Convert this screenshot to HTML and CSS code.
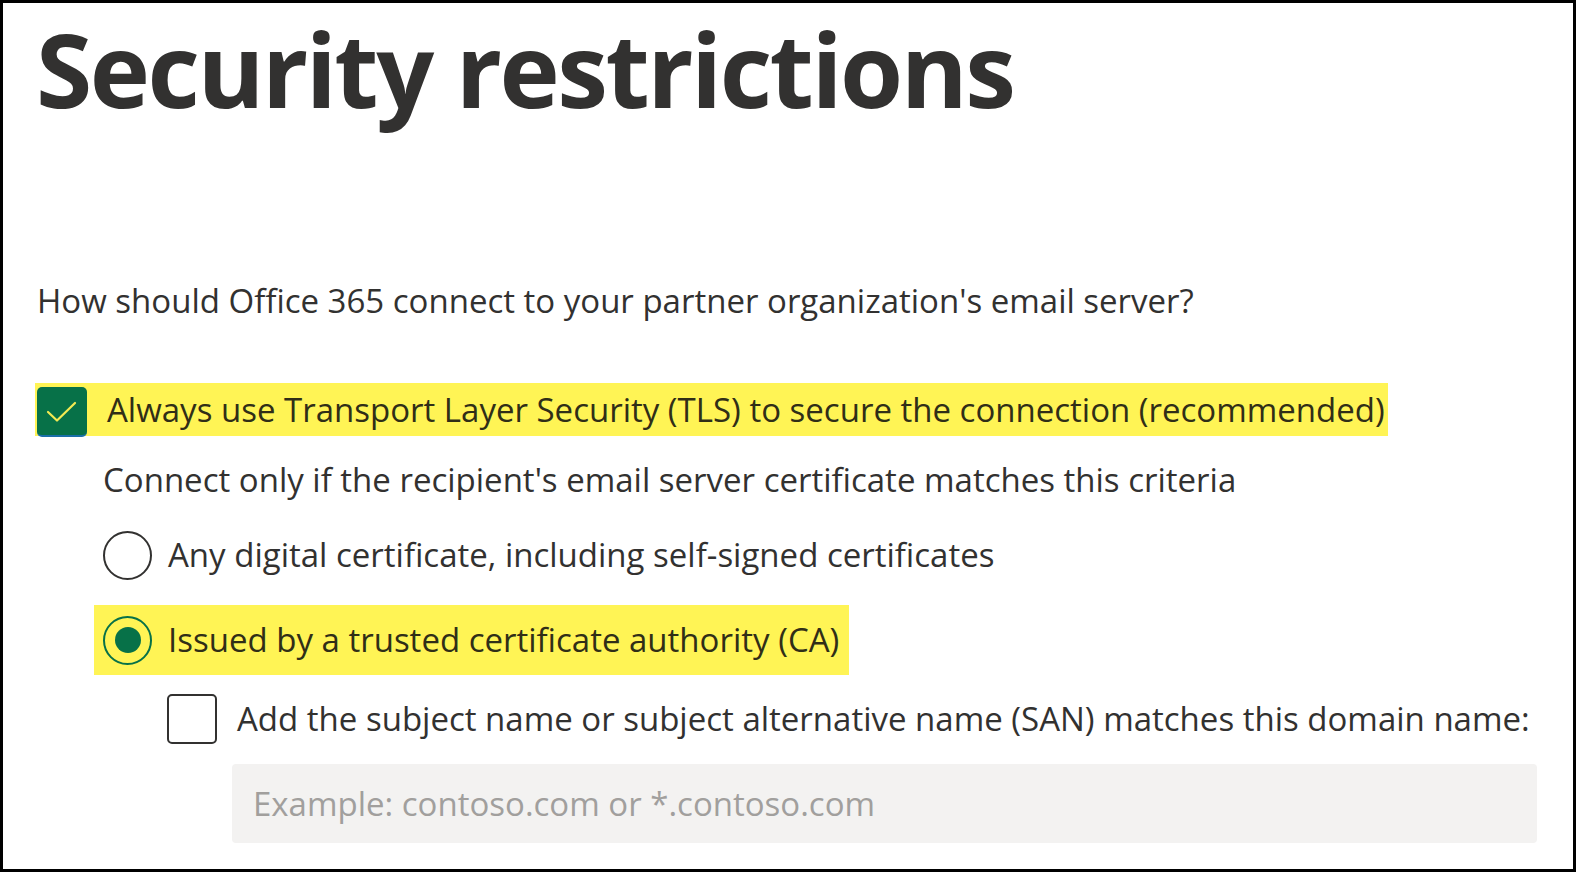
FILE: index.html
```html
<!DOCTYPE html>
<html>
<head>
<meta charset="utf-8">
<link rel="stylesheet" href="styles.css">
</head>
<body>
<div class="frame">
  <h1 class="title">Security restrictions</h1>
  <p class="question">How should Office 365 connect to your partner organization's email server?</p>
  <div class="row hl hl-tls">
    <span class="checkbox checked"><svg viewBox="0 0 50 50" width="50" height="50"><path d="M11 25 L20 33.5 L38 16" fill="none" stroke="#f3ea52" stroke-width="2.2" stroke-linecap="round" stroke-linejoin="round"/></svg></span>
    <span class="label">Always use Transport Layer Security (TLS) to secure the connection (recommended)</span>
  </div>
  <div class="sub">
    <p class="criteria">Connect only if the recipient's email server certificate matches this criteria</p>
    <div class="row radio-row radio-any">
      <span class="radio"></span>
      <span class="label">Any digital certificate, including self-signed certificates</span>
    </div>
    <div class="row radio-row hl hl-ca">
      <span class="radio selected"><span class="dot"></span></span>
      <span class="label">Issued by a trusted certificate authority (CA)</span>
    </div>
    <div class="san">
      <div class="row san-row">
        <span class="checkbox"></span>
        <span class="label">Add the subject name or subject alternative name (SAN) matches this domain name:</span>
      </div>
      <div class="input"><span class="placeholder">Example: contoso.com or *.contoso.com</span></div>
    </div>
  </div>
</div>
</body>
</html>
```
FILE: styles.css
```css
html, body {
  margin: 0;
  padding: 0;
  background: #fff;
}
.frame {
  box-sizing: border-box;
  width: 1576px;
  height: 872px;
  border: 3px solid #000;
  padding: 0 0 0 34px;
  font-family: "Open Sans", sans-serif;
  color: #323130;
  font-size: 33px;
  line-height: 44px;
}
.title {
  margin: -2px 0 0 -1px;
  font-size: 102px;
  font-weight: 700;
  line-height: 136px;
  letter-spacing: -2.5px;
  color: #323130;
}
.question {
  margin: 142px 0 0 0;
}
.row {
  display: flex;
  align-items: center;
}
.hl {
  background: #fff455;
  width: max-content;
  color: #302e17;
}
.hl-tls {
  margin: 60px 0 0 -2px;
  height: 53px;
  padding-right: 3px;
}
.checkbox {
  box-sizing: border-box;
  width: 50px;
  height: 50px;
  border: 2px solid #323130;
  border-radius: 5px;
  flex: none;
  display: flex;
}
.checkbox.checked {
  background: #077148;
  border: none;
  border-bottom: 2px solid #1a6fa8;
  border-radius: 5px;
  align-self: flex-end;
  margin-bottom: -1px;
}
.hl-tls .checkbox {
  margin-left: 2px;
  margin-right: 20px;
}
.sub {
  padding-left: 66px;
}
.criteria {
  margin: 22px 0 0 0;
}
.radio-row {
  height: 62px;
}
.radio-row .label {
  margin-left: 16px;
}
.radio-any {
  margin-top: 22px;
}
.radio {
  box-sizing: border-box;
  width: 49px;
  height: 49px;
  border-radius: 50%;
  border: 2px solid #323130;
  flex: none;
  display: flex;
  align-items: center;
  justify-content: center;
}
.radio.selected {
  border-color: #077148;
}
.dot {
  width: 26px;
  height: 26px;
  border-radius: 50%;
  background: #077148;
}
.hl-ca {
  margin-top: 19px;
  margin-left: -9px;
  padding-left: 9px;
  padding-right: 10px;
  height: 70px;
}
.san {
  padding-left: 64px;
  margin-top: 19px;
}
.san-row {
  height: 50px;
}
.san-row .label {
  margin-left: 20px;
}
.input {
  margin: 20px 0 0 65px;
  width: 1305px;
  height: 79px;
  background: #f3f2f1;
  border-radius: 4px;
  display: flex;
  align-items: center;
  padding-left: 21px;
  box-sizing: border-box;
}
.placeholder {
  color: #a19f9d;
}
```
